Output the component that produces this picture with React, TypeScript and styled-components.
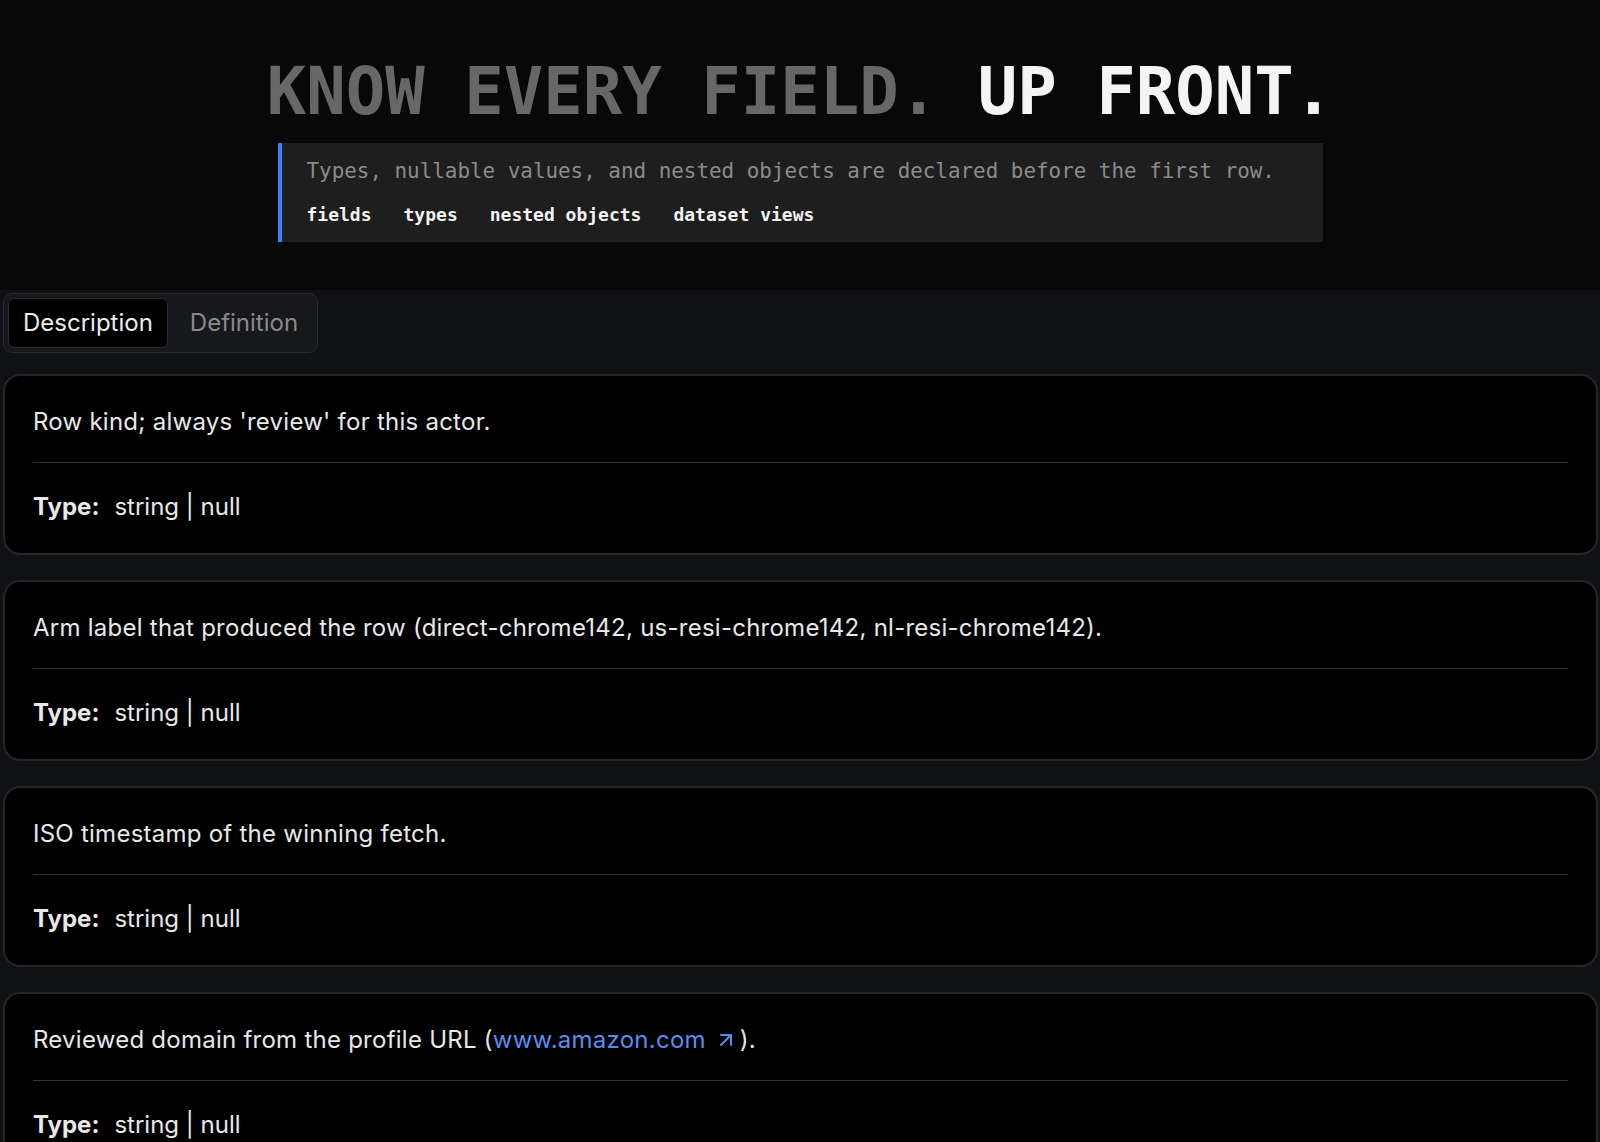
import React, { useState } from "react";
import styled, { createGlobalStyle } from "styled-components";
import { ArrowUpRight } from "lucide-react";

const GlobalStyle = createGlobalStyle`
  html, body { margin: 0; padding: 0; background: #0f1114; }
  body { font-family: Inter, "Noto Sans", "Liberation Sans", sans-serif; color: #e6e6e6; }
  * { box-sizing: border-box; }
`;

const Header = styled.header`
  background: #080808;
  padding: 59px 0 48px;
  display: flex;
  flex-direction: column;
  align-items: center;
`;

const Title = styled.h1`
  margin: 0 0 20px;
  font-family: "DejaVu Sans Mono", "Liberation Mono", monospace;
  font-weight: 700;
  font-size: 65.6px;
  line-height: 64px;
  letter-spacing: 0;
  white-space: nowrap;
`;

const TitlePart = styled.span<{ $bright?: boolean }>`
  color: ${(p) => (p.$bright ? "#f4f4f4" : "#676767")};
`;

const Callout = styled.div`
  width: 1045px;
  background: #1e1e1e;
  border-left: 4px solid #3b82f6;
  padding: 14px 24px 15px 25px;
  display: flex;
  flex-direction: column;
  gap: 16px;
  font-family: "DejaVu Sans Mono", "Liberation Mono", monospace;
`;

const Lead = styled.p`
  margin: 0;
  font-size: 20.9px;
  line-height: 29px;
  color: #8b8b8b;
`;

const TagRow = styled.div`
  display: flex;
  gap: 32px;
`;

const Tag = styled.span`
  font-size: 18px;
  line-height: 25px;
  font-weight: 700;
  color: #f2f2f2;
`;

const Main = styled.main`
  background: #0f1114;
  padding: 3px 2px 40px 3px;
`;

const TabList = styled.div`
  display: inline-flex;
  gap: 7px;
  padding: 4px;
  background: #17181b;
  border: 1px solid #2b2c30;
  border-radius: 9px;
  margin-bottom: 21px;
`;

const Tab = styled.button<{ $active?: boolean }>`
  height: 50px;
  padding: 0 14px;
  font-family: Inter, "Noto Sans", sans-serif;
  font-size: 24px;
  line-height: 1.2;
  border-radius: 7px;
  cursor: pointer;
  background: ${(p) => (p.$active ? "#000000" : "transparent")};
  border: 1px solid ${(p) => (p.$active ? "#2a2b2e" : "transparent")};
  color: ${(p) => (p.$active ? "#ececec" : "#8a8a8a")};
`;

const CardList = styled.div`
  display: flex;
  flex-direction: column;
  gap: 25px;
`;

const Card = styled.section`
  background: #000;
  border: 2px solid #24262a;
  border-radius: 17px;
  padding: 28px;
`;

const Desc = styled.p`
  margin: 0;
  font-size: 24px;
  line-height: 36px;
  letter-spacing: 0.25px;
  color: #e8e8e8;
`;

const Divider = styled.hr`
  margin: 22px 0 26px;
  border: 0;
  height: 1px;
  background: #303236;
`;

const TypeLine = styled.div`
  font-size: 24px;
  line-height: 36px;
  color: #e8e8e8;
  display: flex;
  gap: 15px;
`;

const TypeLabel = styled.strong`
  font-weight: 700;
`;

const Link = styled.a`
  color: #5b8def;
  text-decoration: none;
  display: inline-flex;
  align-items: center;
  gap: 8px;
  margin-right: 2px;
`;

type Field = { desc: React.ReactNode; type: string };

const fields: Field[] = [
  { desc: "Row kind; always 'review' for this actor.", type: "string | null" },
  {
    desc: "Arm label that produced the row (direct-chrome142, us-resi-chrome142, nl-resi-chrome142).",
    type: "string | null",
  },
  { desc: "ISO timestamp of the winning fetch.", type: "string | null" },
  {
    desc: (
      <>
        Reviewed domain from the profile URL (
        <Link href="#">
          www.amazon.com
          <ArrowUpRight size={24} strokeWidth={2} />
        </Link>
        ).
      </>
    ),
    type: "string | null",
  },
];

export default function App() {
  const [tab, setTab] = useState("description");
  return (
    <>
      <GlobalStyle />
      <Header>
        <Title>
          <TitlePart>KNOW EVERY FIELD. </TitlePart>
          <TitlePart $bright>UP FRONT.</TitlePart>
        </Title>
        <Callout>
          <Lead>Types, nullable values, and nested objects are declared before the first row.</Lead>
          <TagRow>
            <Tag>fields</Tag>
            <Tag>types</Tag>
            <Tag>nested objects</Tag>
            <Tag>dataset views</Tag>
          </TagRow>
        </Callout>
      </Header>
      <Main>
        <TabList>
          <Tab $active={tab === "description"} onClick={() => setTab("description")}>
            Description
          </Tab>
          <Tab $active={tab === "definition"} onClick={() => setTab("definition")}>
            Definition
          </Tab>
        </TabList>
        <CardList>
          {fields.map((f, i) => (
            <Card key={i}>
              <Desc>{f.desc}</Desc>
              <Divider />
              <TypeLine>
                <TypeLabel>Type:</TypeLabel>
                <span>{f.type}</span>
              </TypeLine>
            </Card>
          ))}
        </CardList>
      </Main>
    </>
  );
}
